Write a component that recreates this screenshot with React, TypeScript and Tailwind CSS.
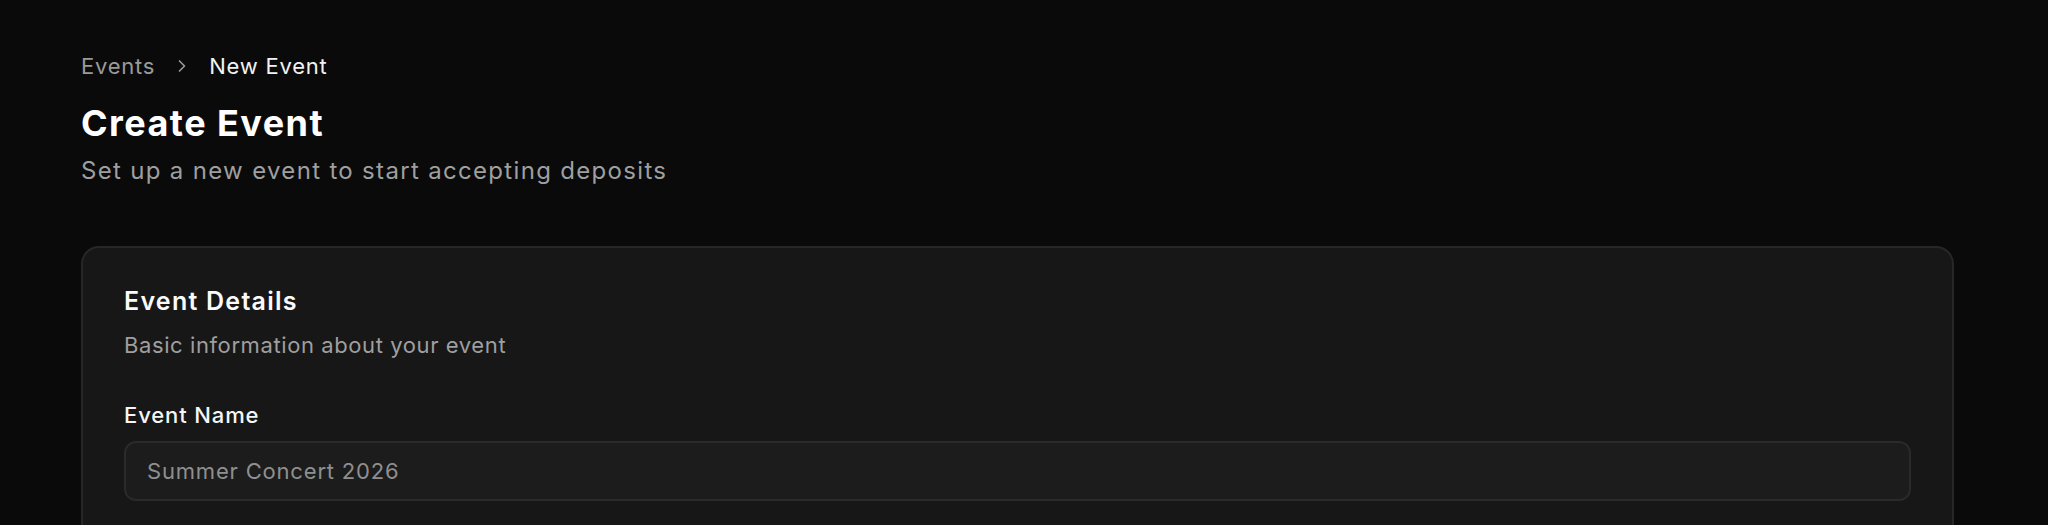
import { ChevronRight } from "lucide-react";

export default function App() {
  return (
    <div
      className="min-h-screen bg-[#0a0a0a] pl-[81px] pr-[94px] pt-[50px] pb-20 text-[#fafafa]"
      style={{ fontFamily: "Inter, 'Noto Sans', sans-serif" }}
    >
      {/* Breadcrumb */}
      <nav className="flex items-center gap-[17px] text-[22px] leading-[32px] tracking-[0.035em]">
        <span className="text-[#9a9a9a]">Events</span>
        <ChevronRight className="h-5 w-5 text-[#9a9a9a]" strokeWidth={2} />
        <span className="text-[#f2f2f2]">New Event</span>
      </nav>

      {/* Heading */}
      <h1 className="mt-[23px] text-[36px] font-bold leading-[36px] tracking-[0.04em] text-white">
        Create Event
      </h1>
      <p className="mt-[14px] text-[24px] leading-[32px] tracking-[0.055em] text-[#9f9f9f]">
        Set up a new event to start accepting deposits
      </p>

      {/* Card */}
      <div className="mt-[59px] rounded-[18px] border-2 border-[#272727] bg-[#171717] px-[41px] pt-[37px] pb-[120px]">
        <h2 className="text-[25px] font-semibold leading-[32px] tracking-[0.05em] text-[#fafafa]">
          Event Details
        </h2>
        <p className="mt-[13px] text-[22px] leading-[30px] tracking-[0.027em] text-[#9f9f9f]">
          Basic information about your event
        </p>

        <div className="mt-10 flex flex-col">
          <label className="text-[22px] font-medium leading-[30px] tracking-[0.04em] text-[#f5f5f5]">
            Event Name
          </label>
          <input
            type="text"
            placeholder="Summer Concert 2026"
            className="mt-[11px] h-[60px] w-full rounded-[12px] border-2 border-[#2a2a2a] bg-[#1c1c1c] px-[21px] text-[22px] tracking-[0.037em] text-[#f5f5f5] outline-none placeholder:text-[#8f8f8f]"
          />
        </div>
      </div>
    </div>
  );
}
